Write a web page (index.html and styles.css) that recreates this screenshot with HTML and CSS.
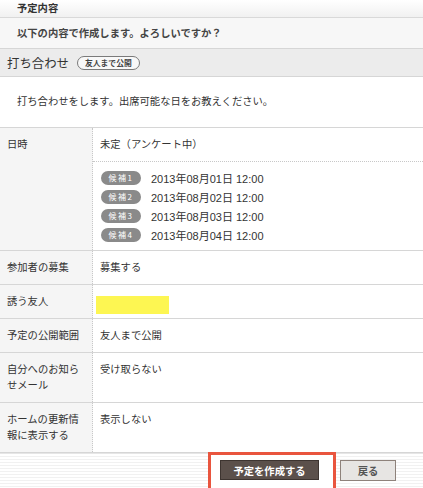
FILE: index.html
```html
<!DOCTYPE html>
<html lang="ja">
<head>
<meta charset="utf-8">
<link rel="stylesheet" href="styles.css">
</head>
<body>
<div class="page">
  <div class="top-head">予定内容</div>
  <div class="confirm">以下の内容で作成します。よろしいですか？</div>
  <div class="title-bar">
    <span class="title">打ち合わせ</span>
    <span class="scope">友人まで公開</span>
  </div>
  <div class="desc">打ち合わせをします。出席可能な日をお教えください。</div>

  <div class="row">
    <div class="label">日時</div>
    <div class="value">
      <div class="when">未定（アンケート中）</div>
      <ul class="cands">
        <li><span class="cand">候補1</span>2013年08月01日 12:00</li>
        <li><span class="cand">候補2</span>2013年08月02日 12:00</li>
        <li><span class="cand">候補3</span>2013年08月03日 12:00</li>
        <li><span class="cand">候補4</span>2013年08月04日 12:00</li>
      </ul>
    </div>
  </div>
  <div class="row">
    <div class="label">参加者の募集</div>
    <div class="value"><div class="cell">募集する</div></div>
  </div>
  <div class="row">
    <div class="label">誘う友人</div>
    <div class="value"><div class="cell"><span class="masked"></span></div></div>
  </div>
  <div class="row">
    <div class="label">予定の公開範囲</div>
    <div class="value"><div class="cell">友人まで公開</div></div>
  </div>
  <div class="row">
    <div class="label">自分へのお知らせメール</div>
    <div class="value"><div class="cell">受け取らない</div></div>
  </div>
  <div class="row">
    <div class="label">ホームの更新情報に表示する</div>
    <div class="value"><div class="cell">表示しない</div></div>
  </div>

  <div class="footer">
    <span class="highlight"><button class="btn-primary">予定を作成する</button></span>
    <button class="btn-back">戻る</button>
  </div>
</div>
</body>
</html>
```

FILE: styles.css
```css
html, body {
  margin: 0;
  padding: 0;
  background: #fff;
}
body {
  font-family: "Noto Sans CJK JP", sans-serif;
  font-size: 10.3px;
  color: #333;
  overflow: hidden;
}
.page {
  width: 423px;
}
.top-head {
  height: 17px;
  line-height: 16px;
  padding-left: 17px;
  font-weight: bold;
  color: #333;
  background: linear-gradient(#ffffff, #f1f1f1);
  border-bottom: 1px solid #d9d9d9;
}
.confirm {
  height: 30px;
  line-height: 30px;
  padding-left: 17px;
  font-weight: bold;
  color: #444;
  background: #f7f7f7;
  border-bottom: 1px solid #d6d6d6;
}
.title-bar {
  height: 27px;
  display: flex;
  align-items: center;
  gap: 8px;
  padding-left: 7px;
  background: #ececec;
  border-bottom: 1px solid #d6d6d6;
}
.title {
  font-size: 12.4px;
  color: #333;
}
.scope {
  display: inline-flex;
  align-items: center;
  height: 12px;
  padding: 0 7px;
  border: 1px solid #7a7a7a;
  border-radius: 7px;
  background: #f8f8f8;
  font-size: 7.8px;
  font-weight: bold;
  color: #444;
  line-height: 12px;
}
.desc {
  height: 50px;
  line-height: 48px;
  padding-left: 17px;
  background: #fff;
  border-bottom: 1px solid #d6d6d6;
}
.row {
  display: grid;
  grid-template-columns: 93px 1fr;
  border-bottom: 1px solid #d6d6d6;
  box-shadow: 0 1px 0 #ececec;
}
.label {
  background: #f5f5f5;
  border-right: 1px dotted #c8c8c8;
  padding: 8px 6px 9px 7px;
  line-height: 16px;
}
.value {
  background: #fff;
}
.cell {
  padding: 8px 7px 9px 7px;
  line-height: 16px;
}
.when {
  padding: 8px 7px 9px 7px;
  line-height: 16px;
  border-bottom: 1px dotted #c8c8c8;
}
.cands {
  list-style: none;
  margin: 0;
  padding: 6px 7px 6px 8px;
}
.cands li {
  height: 19px;
  display: flex;
  align-items: center;
  gap: 10px;
  font-family: "Liberation Sans", "Noto Sans CJK JP", sans-serif;
  font-size: 11px;
}
.cand {
  display: inline-flex;
  align-items: center;
  justify-content: center;
  width: 40px;
  height: 14px;
  border-radius: 7px;
  background: #8a8a8a;
  color: #fff;
  font-family: "Noto Sans CJK JP", sans-serif;
  font-size: 8px;
  letter-spacing: 1.5px;
}
.masked {
  display: block;
  width: 73px;
  height: 18px;
  margin-left: -4px;
  margin-top: 3px;
  margin-bottom: -5px;
  background: #fdf652;
}
.footer {
  height: 40px;
  display: flex;
  justify-content: flex-end;
  align-items: flex-start;
  gap: 4px;
  padding-right: 27px;
  border-top: 1px solid #e6e6e6;
  background: repeating-linear-gradient(to bottom, #ffffff 0 2px, #f1f1f1 2px 3px);
}
.highlight {
  display: inline-block;
  margin-top: -2px;
  border: 3px solid #e9553e;
  padding: 5px 14px 9px 9px;
  background: #fff;
}
.btn-primary {
  display: block;
  width: 99px;
  height: 20px;
  margin: 0;
  padding: 0;
  border: 1px solid #3d3430;
  background: #5b504b;
  color: #fff;
  font-family: "Noto Sans CJK JP", sans-serif;
  font-size: 10.3px;
  font-weight: bold;
}
.btn-back {
  margin: 6px 0 0 0;
  width: 56px;
  height: 21px;
  padding: 0;
  border: 1px solid #8e827b;
  background: #e7e5e3;
  color: #555;
  font-family: "Noto Sans CJK JP", sans-serif;
  font-size: 10.3px;
  font-weight: bold;
}
```
